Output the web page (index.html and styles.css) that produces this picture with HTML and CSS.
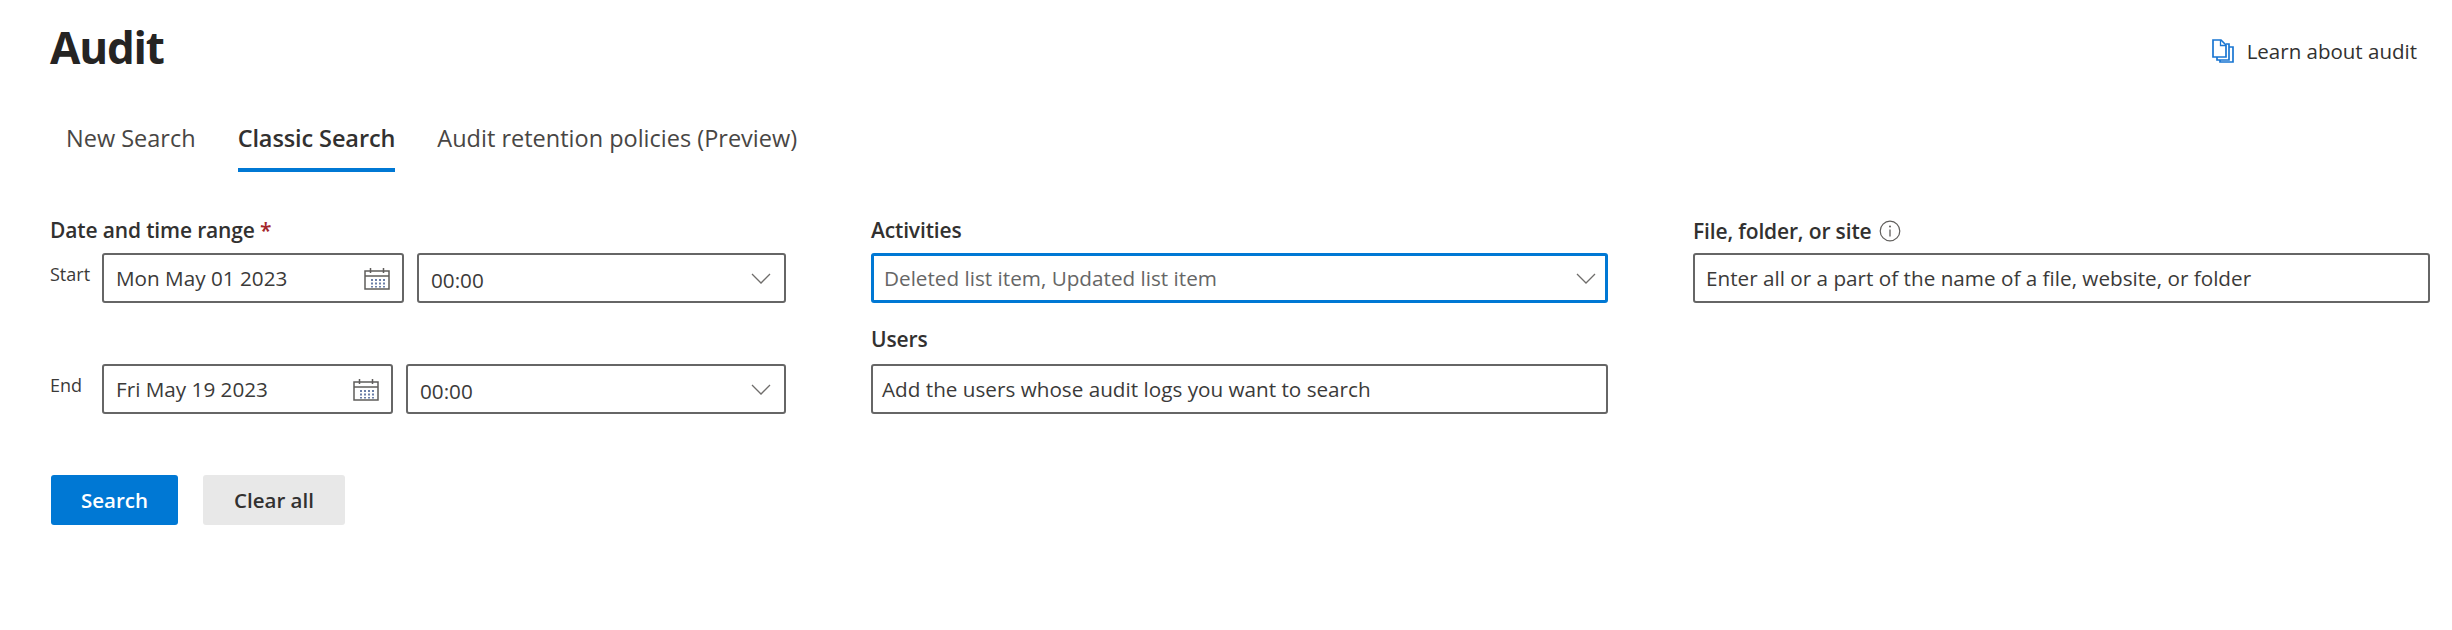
FILE: index.html
```html
<!DOCTYPE html>
<html lang="en">
<head>
<meta charset="utf-8">
<title>Audit</title>
<link rel="stylesheet" href="styles.css">
</head>
<body>
<svg class="defs" width="0" height="0" aria-hidden="true">
  <defs>
    <symbol id="chev" viewBox="0 0 20 11"><path d="M1 1l9 9 9-9" fill="none" stroke="#6f6d6b" stroke-width="1.300"/></symbol>
    <symbol id="cal" viewBox="0 0 26 23">
      <path d="M1 4h24v18H1zM1 9h24M6.500 1v5M19.500 1v5" fill="none" stroke="#5f5d5b" stroke-width="1.500"/>
      <path d="M7 12h2v2H7zM11 12h2v2h-2zM15 12h2v2h-2zM19 12h2v2h-2zM7 15.500h2v2H7zM11 15.500h2v2h-2zM15 15.500h2v2h-2zM19 15.500h2v2h-2zM11 19h2v1.500h-2zM15 19h2v1.500h-2zM19 19h2v1.500h-2zM7 19h2v1.500H7z" fill="#6b7fa8"/>
    </symbol>
  </defs>
</svg>
<header class="top">
  <h1 class="title">Audit</h1>
  <a class="learn" href="#">
    <svg class="learn-icon" viewBox="0 0 22 24" width="22" height="24" aria-hidden="true">
      <path d="M1 1h8l5 5v12H1z" fill="#fff" stroke="#1976d2" stroke-width="1.700"/>
      <path d="M8.500 1v5.500H14" fill="none" stroke="#1976d2" stroke-width="1.300"/>
      <path d="M14 5h3v16H5v-3M17 8h4v15H8v-2" fill="none" stroke="#1976d2" stroke-width="1.700"/>
    </svg>
    <span>Learn about audit</span>
  </a>
</header>
<nav class="tabs">
  <a class="tab" href="#">New Search</a>
  <a class="tab tab-active" href="#">Classic Search</a>
  <a class="tab" href="#">Audit retention policies (Preview)</a>
</nav>
<main class="form">
  <section class="col">
    <div class="label">Date and time range <span class="req">*</span></div>
    <div class="range">
      <span class="range-label">Start</span>
      <div class="box date date-start"><span>Mon May 01 2023</span><svg class="cal"><use href="#cal"/></svg></div>
      <div class="box time"><span class="time-text">00:00</span><svg class="chev"><use href="#chev"/></svg></div>
    </div>
    <div class="range range-end">
      <span class="range-label">End</span>
      <div class="box date date-end"><span>Fri May 19 2023</span><svg class="cal"><use href="#cal"/></svg></div>
      <div class="box time"><span class="time-text">00:00</span><svg class="chev"><use href="#chev"/></svg></div>
    </div>
  </section>
  <section class="col">
    <div class="label">Activities</div>
    <div class="box box-focus"><span class="hint">Deleted list item, Updated list item</span><svg class="chev"><use href="#chev"/></svg></div>
    <div class="label label-users">Users</div>
    <div class="box box-users"><span>Add the users whose audit logs you want to search</span></div>
  </section>
  <section class="col">
    <div class="label label-info">File, folder, or site
      <svg class="info" viewBox="0 0 22 22" width="22" height="22" aria-hidden="true">
        <circle cx="11" cy="11" r="9.800" fill="none" stroke="#605e5c" stroke-width="1.200"/>
        <path d="M11 9.500v7" stroke="#605e5c" stroke-width="1.300"/><circle cx="11" cy="6.500" r="1" fill="#605e5c"/>
      </svg>
    </div>
    <div class="box box-file"><span>Enter all or a part of the name of a file, website, or folder</span></div>
  </section>
</main>
<div class="actions">
  <button class="btn btn-primary" type="button">Search</button>
  <button class="btn btn-plain" type="button">Clear all</button>
</div>
</body>
</html>
```
FILE: styles.css
```css
* { box-sizing: border-box; }
html, body { margin: 0; padding: 0; }
body {
  width: 2452px;
  height: 630px;
  overflow: hidden;
  background: #fff;
  color: #323130;
  font-family: "Open Sans", "Noto Sans", "Liberation Sans", sans-serif;
  font-size: 20.700px;
}
.defs { position: absolute; }
.top {
  display: flex;
  justify-content: space-between;
  align-items: center;
  height: 60px;
  margin-top: 17px;
  padding: 0 35px 0 50px;
}
.title { margin: 0; font-size: 44px; line-height: 60px; font-weight: 700; letter-spacing: -1.200px; color: #252423; }
.learn { display: flex; align-items: center; gap: 13px; color: #323130; text-decoration: none; font-size: 20.500px; margin-top: 7px; }
.learn-icon { display: block; }
.tabs { display: flex; gap: 42px; margin-top: 46px; padding-left: 66px; }
.tab {
  display: block;
  height: 49px;
  line-height: 30px;
  font-size: 23.500px;
  color: #484644;
  text-decoration: none;
}
.tab-active { color: #323130; font-weight: 600; letter-spacing: -0.100px; border-bottom: 4px solid #0078d4; }
.form {
  display: grid;
  grid-template-columns: 736px 737px 737px;
  column-gap: 85px;
  margin-top: 42px;
  padding-left: 50px;
}
.col { display: flex; flex-direction: column; }
.label { height: 34px; line-height: 32px; margin-bottom: 5px; font-size: 21px; letter-spacing: -0.150px; font-weight: 600; color: #323130; }
.req { color: #a4262c; }
.label-users { margin-top: 20px; margin-bottom: 7px; }
.label-info { display: flex; align-items: center; gap: 7px; }
.info { display: block; }
.box {
  display: flex;
  align-items: center;
  justify-content: space-between;
  height: 50px;
  border: 2px solid #666;
  border-radius: 3px;
  padding: 0 13px 0 12px;
  color: #3b3a39;
  background: #fff;
}
.box-focus { border: 3px solid #0078d4; border-radius: 3px; padding: 0 9px 0 10px; }
.box-users { padding-left: 9px; }
.box-file { padding-left: 11px; }
.hint { color: #666; }
.range { display: flex; align-items: center; }
.range-end { margin-top: 61px; }
.range-label { width: 52px; align-self: flex-start; margin-top: 6px; font-size: 18px; line-height: 30px; color: #3b3a39; }
.date { flex: none; }
.date-start { width: 302px; margin-right: 13px; padding-right: 12px; }
.date-end { width: 291px; margin-right: 13px; padding-right: 12px; }
.time { flex: 1; }
.time-text { margin-top: 4px; }
.cal { width: 26px; height: 23px; display: block; }
.chev { width: 20px; height: 11px; display: block; }
.actions { display: flex; gap: 25px; margin-top: 61px; padding-left: 51px; }
.btn {
  height: 50px;
  border: 0;
  border-radius: 3px;
  font-family: inherit;
  font-size: 20.500px;
  font-weight: 600;
  padding: 0;
}
.btn-primary { width: 127px; background: #0078d4; color: #fff; }
.btn-plain { width: 142px; background: #e8e8e8; color: #323130; }
```
